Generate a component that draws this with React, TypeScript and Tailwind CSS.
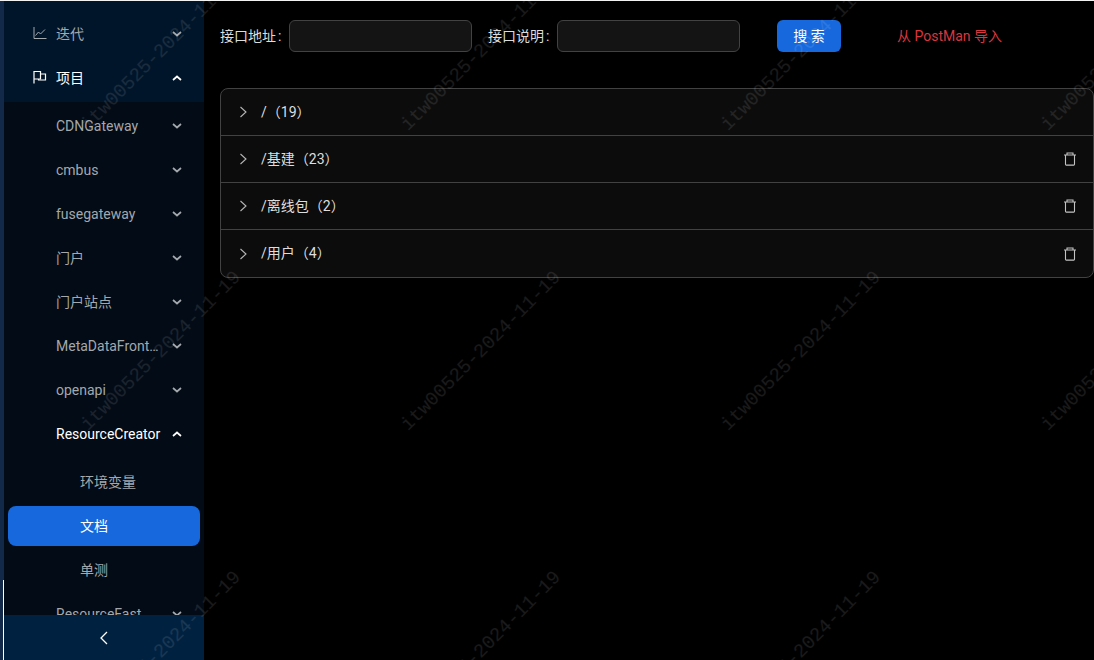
import React from "react";

const FONT = "[font-family:'Roboto','Noto_Sans_CJK_SC',sans-serif]";

function Chevron({ up }: { up?: boolean }) {
  return (
    <svg width="10" height="6" viewBox="0 0 10 6" fill="none" className="shrink-0">
      <path
        d={up ? "M1 5 L5 1.5 L9 5" : "M1 1 L5 4.5 L9 1"}
        stroke="currentColor"
        strokeWidth="1.7"
      />
    </svg>
  );
}

function LineIcon() {
  return (
    <svg width="14" height="14" viewBox="0 0 14 14" fill="none" stroke="currentColor" strokeWidth="1">
      <path d="M1 1 V12.5 H13.5" />
      <path d="M2.5 9.5 L5.5 6 L7.5 8 L12 3.5" />
    </svg>
  );
}

function FlagIcon() {
  return (
    <svg width="14" height="14" viewBox="0 0 14 14" fill="none" stroke="currentColor" strokeWidth="1.2">
      <path d="M1 13.5 V1.5 H7.5 V9 H1" />
      <path d="M7.5 4 H12.5 V10 H5.5 V9" />
    </svg>
  );
}

function Trash() {
  return (
    <svg width="14" height="14" viewBox="0 0 14 14" fill="none" stroke="#c4c4c4" strokeWidth="1.1">
      <path d="M1 3 H13" />
      <path d="M4 3 V1 H10 V3" />
      <path d="M2.5 3 V12.3 A.8 .8 0 0 0 3.3 13.1 H10.7 A.8 .8 0 0 0 11.5 12.3 V3" />
    </svg>
  );
}

function Row({
  label,
  pad = "pl-[48px]",
  arrow,
  active,
  bright,
  icon,
}: {
  label: string;
  pad?: string;
  arrow?: "up" | "down";
  active?: boolean;
  bright?: boolean;
  icon?: React.ReactNode;
}) {
  return (
    <div
      className={`mx-[4px] mb-[4px] flex h-[40px] shrink-0 items-center rounded-[8px] pr-[18px] text-[14px] ${pad} ${
        active ? "bg-[#1668dc] text-white" : bright ? "text-white" : "text-[#a3a8ad]"
      }`}
    >
      {icon && <span className="mr-[9px] flex w-[14px] shrink-0 -translate-y-px">{icon}</span>}
      <span className="min-w-0 flex-1 truncate pr-[9px]">{label}</span>
      {arrow && <Chevron up={arrow === "up"} />}
    </div>
  );
}

function Sidebar() {
  return (
    <aside className="flex h-full w-[200px] shrink-0 flex-col bg-[#000c17]">
      <div className="min-h-0 flex-1 overflow-hidden">
        <div className="flex flex-col bg-[#001529] pt-[13px]">
          <Row label="迭代" pad="pl-[25px]" arrow="down" icon={<LineIcon />} />
          <Row label="项目" pad="pl-[25px]" arrow="up" bright icon={<FlagIcon />} />
        </div>
        <div className="flex flex-col bg-[#020b16] pt-[4px]">
          <Row label="CDNGateway" arrow="down" />
          <Row label="cmbus" arrow="down" />
          <Row label="fusegateway" arrow="down" />
          <Row label="门户" arrow="down" />
          <Row label="门户站点" arrow="down" />
          <Row label="MetaDataFrontend" arrow="down" />
          <Row label="openapi" arrow="down" />
          <Row label="ResourceCreator" arrow="up" bright />
          <div className="flex flex-col pt-[4px]">
            <Row label="环境变量" pad="pl-[72px]" />
            <Row label="文档" pad="pl-[72px]" active />
            <Row label="单测" pad="pl-[72px]" />
            <Row label="ResourceFast" arrow="down" />
          </div>
        </div>
      </div>
      <div className="flex h-[45px] shrink-0 items-center justify-center bg-[#002140] pt-[1px] text-white">
        <svg width="12" height="14" viewBox="0 0 12 14" fill="none" stroke="currentColor" strokeWidth="1.3">
          <path d="M9 1 L3 7 L9 13" />
        </svg>
      </div>
    </aside>
  );
}

function Field({ label }: { label: string }) {
  return (
    <div className="flex items-center">
      <label className="w-[69px] text-[14px] text-[#dcdcdc]">
        {label}
        <span className="ml-[2px]">:</span>
      </label>
      <div className="h-[32px] w-[183px] rounded-[6px] border border-[#424242] bg-[#141414]" />
    </div>
  );
}

function CollapseRow({ label, trash, last }: { label: string; trash?: boolean; last?: boolean }) {
  return (
    <div
      className={`flex h-[47px] items-center pl-[18px] pr-[16px] text-[14px] text-[#dedede] ${
        last ? "" : "border-b border-[#424242]"
      }`}
    >
      <svg width="10" height="12" viewBox="0 0 10 12" fill="none" stroke="#b5b5b5" strokeWidth="1.1" className="mr-[12px]">
        <path d="M1.5 1 L7 6 L1.5 11" />
      </svg>
      <span className="flex-1">{label}</span>
      {trash && <Trash />}
    </div>
  );
}

function Watermarks() {
  const cells = Array.from({ length: 12 }, (_, i) => i);
  return (
    <div className="pointer-events-none absolute left-[1px] top-[-100px] grid grid-cols-[repeat(4,320px)] grid-rows-[repeat(3,300px)]">
      {cells.map((i) => (
        <div key={i} className="flex items-center justify-center">
          <span className="-rotate-45 whitespace-nowrap [font-family:'Liberation_Mono',monospace] text-[19px] text-white/10">
            itw00525-2024-11-19
          </span>
        </div>
      ))}
    </div>
  );
}

export default function App() {
  return (
    <div className={`relative flex h-[660px] w-[1094px] overflow-hidden border-t border-[#f2f2f2] bg-black ${FONT}`}>
      <div className="flex w-[4px] shrink-0 flex-col bg-[#12294a]">
        <div className="mt-auto h-[80px] border-r border-white" />
      </div>
      <Sidebar />
      <main className="min-w-0 flex-1 pl-[16px] pt-[19px]">
        <div className="flex items-center">
          <Field label="接口地址" />
          <div className="w-[16px]" />
          <Field label="接口说明" />
          <button className="ml-[37px] h-[32px] w-[64px] rounded-[6px] bg-[#1668dc] text-[14px] text-white">
            搜 索
          </button>
          <span className="ml-[56px] text-[14px] text-[#d9363e]">从 PostMan 导入</span>
        </div>
        <div className="mt-[36px] overflow-hidden rounded-[8px] border border-[#424242] bg-[#0c0c0c]">
          <CollapseRow label="/（19）" />
          <CollapseRow label="/基建（23）" trash />
          <CollapseRow label="/离线包（2）" trash />
          <CollapseRow label="/用户（4）" trash last />
        </div>
      </main>
      <Watermarks />
    </div>
  );
}
